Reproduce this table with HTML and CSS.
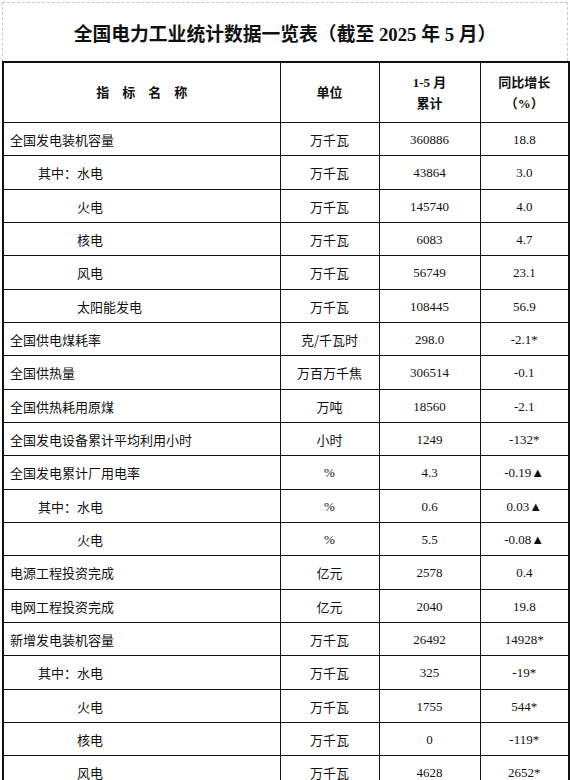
FILE: index.html
```html
<!DOCTYPE html>
<html lang="zh-CN">
<head>
<meta charset="utf-8">
<title>全国电力工业统计数据一览表</title>
<link rel="stylesheet" href="styles.css">
</head>
<body>
<div class="page">
  <div class="title">全国电力工业统计数据一览表（截至 2025 年 5 月）</div>
  <table class="stats">
    <colgroup>
      <col class="c-name"><col class="c-unit"><col class="c-val"><col class="c-yoy">
    </colgroup>
    <thead>
      <tr>
        <th><span class="spaced">指标名称</span></th>
        <th>单位</th>
        <th>1-5 月<br>累计</th>
        <th>同比增长<br>（%）</th>
      </tr>
    </thead>
    <tbody>
      <tr><td class="name">全国发电装机容量</td><td>万千瓦</td><td class="num">360886</td><td class="num">18.8</td></tr>
      <tr><td class="name sub">其中：水电</td><td>万千瓦</td><td class="num">43864</td><td class="num">3.0</td></tr>
      <tr><td class="name sub2">火电</td><td>万千瓦</td><td class="num">145740</td><td class="num">4.0</td></tr>
      <tr><td class="name sub2">核电</td><td>万千瓦</td><td class="num">6083</td><td class="num">4.7</td></tr>
      <tr><td class="name sub2">风电</td><td>万千瓦</td><td class="num">56749</td><td class="num">23.1</td></tr>
      <tr><td class="name sub2">太阳能发电</td><td>万千瓦</td><td class="num">108445</td><td class="num">56.9</td></tr>
      <tr><td class="name">全国供电煤耗率</td><td>克/千瓦时</td><td class="num">298.0</td><td class="num">-2.1*</td></tr>
      <tr><td class="name">全国供热量</td><td>万百万千焦</td><td class="num">306514</td><td class="num">-0.1</td></tr>
      <tr><td class="name">全国供热耗用原煤</td><td>万吨</td><td class="num">18560</td><td class="num">-2.1</td></tr>
      <tr><td class="name">全国发电设备累计平均利用小时</td><td>小时</td><td class="num">1249</td><td class="num">-132*</td></tr>
      <tr><td class="name">全国发电累计厂用电率</td><td class="num">%</td><td class="num">4.3</td><td class="num">-0.19▲</td></tr>
      <tr><td class="name sub">其中：水电</td><td class="num">%</td><td class="num">0.6</td><td class="num">0.03▲</td></tr>
      <tr><td class="name sub2">火电</td><td class="num">%</td><td class="num">5.5</td><td class="num">-0.08▲</td></tr>
      <tr><td class="name">电源工程投资完成</td><td>亿元</td><td class="num">2578</td><td class="num">0.4</td></tr>
      <tr><td class="name">电网工程投资完成</td><td>亿元</td><td class="num">2040</td><td class="num">19.8</td></tr>
      <tr><td class="name">新增发电装机容量</td><td>万千瓦</td><td class="num">26492</td><td class="num">14928*</td></tr>
      <tr><td class="name sub">其中：水电</td><td>万千瓦</td><td class="num">325</td><td class="num">-19*</td></tr>
      <tr><td class="name sub2">火电</td><td>万千瓦</td><td class="num">1755</td><td class="num">544*</td></tr>
      <tr><td class="name sub2">核电</td><td>万千瓦</td><td class="num">0</td><td class="num">-119*</td></tr>
      <tr><td class="name sub2">风电</td><td>万千瓦</td><td class="num">4628</td><td class="num">2652*</td></tr>
    </tbody>
  </table>
</div>
</body>
</html>
```

FILE: styles.css
```css
html, body {
  margin: 0;
  padding: 0;
  background: #ffffff;
}
body {
  font-family: "Liberation Serif", "Noto Sans CJK SC", serif;
  color: #111111;
}
.page {
  margin: 2px 0 0 2px;
  width: 566px;
}
.title {
  height: 58px;
  border: 1px dashed #c9c9c9;
  border-bottom: none;
  display: flex;
  align-items: center;
  justify-content: center;
  font-family: "Liberation Serif", "Noto Sans CJK SC", serif;
  font-weight: 700;
  font-size: 18.8px;
  color: #111111;
}
.stats {
  width: 566px;
  border-collapse: collapse;
  table-layout: fixed;
  border: 2px solid #111111;
}
.c-name { width: 277px; }
.c-unit { width: 99px; }
.c-val { width: 101px; }
.c-yoy { width: 89px; }
.stats th,
.stats td {
  border: 1px solid #111111;
  padding: 0;
  text-align: center;
  vertical-align: middle;
  font-size: 13px;
}
.stats th {
  height: 59px;
  font-weight: 700;
  line-height: 21px;
  font-family: "Liberation Serif", "Noto Sans CJK SC", serif;
}
.spaced {
  letter-spacing: 13px;
  padding-left: 13px;
}
.stats td {
  height: 30.33px;
  font-family: "Noto Sans CJK SC", "Liberation Sans", sans-serif;
  line-height: 16px;
  padding-top: 2px;
}
.stats td.num {
  font-family: "Liberation Serif", "Noto Sans CJK SC", serif;
}
.stats td.name {
  text-align: left;
  padding-left: 6px;
}
.stats td.sub {
  padding-left: 34px;
}
.stats td.sub2 {
  padding-left: 73px;
}
```
